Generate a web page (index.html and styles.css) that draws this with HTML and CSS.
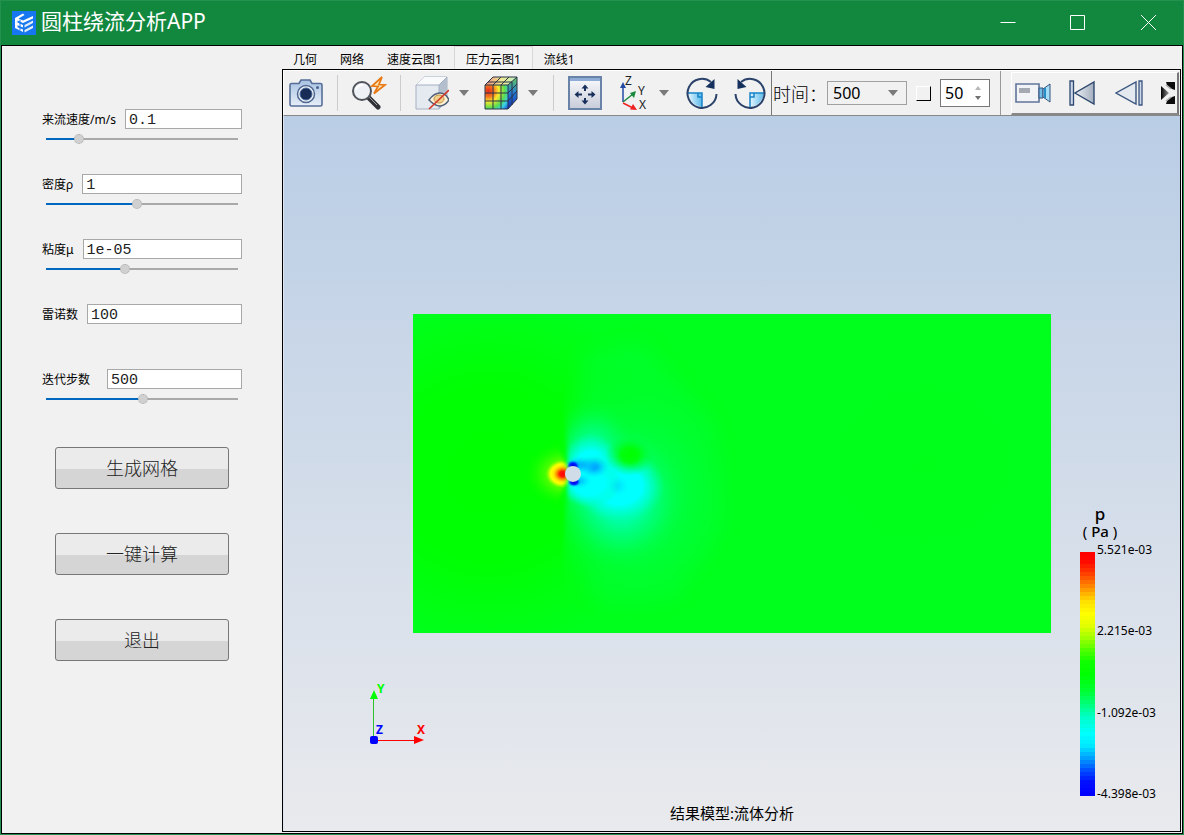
FILE: index.html
```html
<!DOCTYPE html>
<html lang="zh-CN">
<head>
<meta charset="utf-8">
<title>圆柱绕流分析APP</title>
<link rel="stylesheet" href="styles.css">
</head>
<body>
<div class="window">
  <header class="titlebar">
    <svg class="logo" width="24" height="24" viewBox="0 0 24 24">
      <rect width="24" height="24" fill="#1677f0"/>
      <path d="M3 7 11 2.500 12.500 4 6.500 7.500 11 9.500 21 5v2.500L11 12 5.500 9.500v2L11 14v2.500l-5.500-2.300v2L11 18.500V21l-8-4Z" fill="#fff"/>
      <path d="M12.500 14 21 9.500V12l-8.500 4.500ZM12.500 19 21 14.500V17l-8.500 4.500Z" fill="#e4edfa"/>
      <path d="M8 8.500v11" stroke="#1677f0"/>
    </svg>
    <h1 class="title">圆柱绕流分析APP</h1>
    <div class="window-buttons">
      <button class="window-button" aria-label="最小化"><svg width="16" height="16" viewBox="0 0 16 16"><path d="M.5 7.500h15"/></svg></button>
      <button class="window-button" aria-label="最大化"><svg width="16" height="16" viewBox="0 0 16 16"><path d="M.5.500h14v14H.5z"/></svg></button>
      <button class="window-button" aria-label="关闭"><svg width="16" height="16" viewBox="0 0 16 16"><path d="m1 0 15 15M16 0 1 15"/></svg></button>
    </div>
  </header>
  <main class="content">
    <form class="sidebar">
      <div class="field">
        <div class="field-row"><label for="speed">来流速度/m/s</label><input class="text-input" id="speed" type="text" value="0.1"></div>
        <input class="slider" type="range" min="0" max="182" value="28" aria-label="来流速度" style="--fill:17%">
      </div>
      <div class="field">
        <div class="field-row"><label for="density">密度ρ</label><input class="text-input" id="density" type="text" value="1"></div>
        <input class="slider" type="range" min="0" max="182" value="86" aria-label="密度" style="--fill:47%">
      </div>
      <div class="field">
        <div class="field-row"><label for="viscosity">粘度μ</label><input class="text-input" id="viscosity" type="text" value="1e-05"></div>
        <input class="slider" type="range" min="0" max="182" value="74" aria-label="粘度" style="--fill:41%">
      </div>
      <div class="field">
        <div class="field-row"><label for="reynolds">雷诺数</label><input class="text-input" id="reynolds" type="text" value="100"></div>
      </div>
      <div class="field">
        <div class="field-row field-row-wide"><label for="steps">迭代步数</label><input class="text-input" id="steps" type="text" value="500"></div>
        <input class="slider" type="range" min="0" max="182" value="92" aria-label="迭代步数" style="--fill:50%">
      </div>
      <div class="actions">
        <button class="action" type="button">生成网格</button>
        <button class="action" type="button">一键计算</button>
        <button class="action" type="button">退出</button>
      </div>
    </form>
    <section class="workspace">
      <nav class="tabs" role="tablist">
        <button class="tab" role="tab">几何</button>
        <button class="tab" role="tab">网络</button>
        <button class="tab" role="tab">速度云图1</button>
        <button class="tab tab-active" role="tab" aria-selected="true">压力云图1</button>
        <button class="tab" role="tab">流线1</button>
      </nav>
      <div class="panel">
        <div class="toolbar">
          <div class="tool-group">
            <button class="tool" type="button" aria-label="截图">
              <svg width="34" height="28" viewBox="0 0 34 28"><defs><linearGradient id="cam" x2="0" y2="1"><stop stop-color="#a9c2e2"/><stop offset="1" stop-color="#e6eef8"/></linearGradient></defs><path d="M2.500 4.500H10L12 1h9l2 3.500h8.500q1.500 0 1.500 1.500v19q0 2-1.500 2h-29Q1 27 1 25V6q0-1.500 1.500-1.500Z" fill="url(#cam)" stroke="#576f98" stroke-width="1.600"/><circle cx="17" cy="15" r="8.500" fill="#f2f6fb" stroke="#4e6791" stroke-width="1.500"/><circle cx="17" cy="15" r="6" fill="#182c56" stroke="#45679b"/><circle cx="28.500" cy="8.500" r="1.500" fill="#47638f"/></svg>
            </button>
          </div>
          <div class="tool-group tool-group-search">
            <button class="tool" type="button" aria-label="快速查询">
              <svg width="36" height="34" viewBox="0 0 36 34"><path d="m18 22 9 9" stroke="#303238" stroke-width="5" stroke-linecap="round"/><path d="m18 21 8 8" stroke="#9da1a8" stroke-width="1"/><circle cx="11" cy="15" r="9" fill="#eef1f5" stroke="#50545b" stroke-width="2"/><path d="M5 14q1-5 7-5" fill="none" stroke="#fff" stroke-width="2"/><path d="m31 1-10 9 6 .5-4 7 11-8.500-6-.5Z" fill="#ffe6b4" stroke="#e87814" stroke-width="1.700"/></svg>
            </button>
          </div>
          <div class="tool-group">
            <button class="tool tool-menu" type="button" aria-label="显示">
              <svg width="34" height="34" viewBox="0 0 34 34"><path d="M1 9 9 1h23v24l-8 8H1Z" fill="#e5eaf1" stroke="#a5b0c2"/><path d="M24 9 32 1v24l-8 8Z" fill="#b4bfce"/><path d="M1 9 9 1h23l-8 8Z" fill="#f8fafc"/><path d="M1 9h23v24M24 9l8-8" stroke="#a5b0c2" fill="none"/><path d="M14 24q5-7 11-7t9 7q-4 6-9 6t-11-6Z" fill="#fff1d1" stroke="#50617b" stroke-width="1.500"/><ellipse cx="24" cy="23" rx="5" ry="4" fill="#f1d28c" stroke="#bd9148"/><path d="m14 33 20-19" stroke="#d43a2b" stroke-width="1.700"/></svg>
              <svg class="caret" width="10" height="6" viewBox="0 0 10 6"><path d="M0 0h10L5 6Z"/></svg>
            </button>
            <button class="tool tool-menu" type="button" aria-label="云图">
              <svg width="34" height="34" viewBox="0 0 34 34"><defs><radialGradient id="hot" cx=".15" cy=".25" r="1.100"><stop stop-color="#e8281c"/><stop offset=".22" stop-color="#f47820"/><stop offset=".4" stop-color="#fce82c"/><stop offset=".65" stop-color="#58dc50"/><stop offset=".82" stop-color="#38cfe8"/><stop offset="1" stop-color="#1850d8"/></radialGradient><linearGradient id="top"><stop stop-color="#f08878"/><stop offset=".5" stop-color="#f0e890"/><stop offset="1" stop-color="#b8f0c0"/></linearGradient><linearGradient id="side" x2="0" y2="1"><stop stop-color="#64cc58"/><stop offset=".5" stop-color="#247cd8"/><stop offset="1" stop-color="#102cb0"/></linearGradient></defs><path d="M1 9h23v24H1Z" fill="url(#hot)"/><path d="M1 9 9 1h24l-9 8Z" fill="url(#top)"/><path d="m24 9 9-8v22l-9 10Z" fill="url(#side)"/><path d="M1 9h23v24H1ZM1 17h23l9-9M1 25h23l9-10M9 33V9l8-8M17 33V9l8-8M1 9l8-8h24l-9 8M4 6h24v23M33 1v22l-9 10" fill="none" stroke="#2b3347" stroke-width="1"/></svg>
              <svg class="caret" width="10" height="6" viewBox="0 0 10 6"><path d="M0 0h10L5 6Z"/></svg>
            </button>
          </div>
          <div class="tool-group">
            <button class="tool" type="button" aria-label="适应窗口">
              <svg width="34" height="34" viewBox="0 0 34 34"><defs><linearGradient id="fit" x2="0" y2="1"><stop stop-color="#fafbfd"/><stop offset="1" stop-color="#c8ccd8"/></linearGradient></defs><path d="M1 1h32v32H1Z" fill="url(#fit)" stroke="#6882a8" stroke-width="2"/><path d="M2 2h30v3H2Z" fill="#8eacd6"/><path d="M14 18.500H9M20 18.500h5M17 15v-4M17 22v4" stroke="#182f5c" stroke-width="2"/><path d="m6.500 18.500 4-3.500v7ZM27.500 18.500l-4-3.500v7ZM17 8.500 13.500 12.500h7ZM17 28.500 13.500 24.500h7Z" fill="#182f5c"/></svg>
            </button>
            <button class="tool tool-menu tool-axes" type="button" aria-label="视图方向">
              <svg width="30" height="40" viewBox="0 -4 30 40"><path d="M4 25V9" stroke="#264ba5" stroke-width="1.500"/><path d="m4 5-3 6h6Z" fill="#264ba5"/><path d="m4 25 10-8" stroke="#198a3d" stroke-width="1.500"/><path d="m17 14-6 2 4 5Z" fill="#198a3d"/><path d="m4 26 10 5" stroke="#e22" stroke-width="1.500"/><path d="m18 33-7-.5 3-5.500Z" fill="#e22"/><g class="axes-letters"><text x="6" y="8">Z</text><text x="19" y="18">Y</text><text x="20" y="32">X</text></g></svg>
              <svg class="caret" width="10" height="6" viewBox="0 0 10 6"><path d="M0 0h10L5 6Z"/></svg>
            </button>
            <button class="tool tool-rotate" type="button" aria-label="顺时针旋转">
              <svg width="32" height="32" viewBox="0 0 32 32"><defs><linearGradient id="quad"><stop stop-color="#e6f6ff"/><stop offset="1" stop-color="#58b8ea"/></linearGradient></defs><path d="M2 16h14v14Q4 28 2 16Z" fill="url(#quad)"/><path d="M2 16h14v14M12 16v4h4" fill="none" stroke="#1684c8" stroke-width="1.500"/><path d="M25 5A14.500 14.500 0 1 0 30.500 17" fill="none" stroke="#2b426b" stroke-width="2"/><path d="M28.500 2v10l-9-2Z" fill="#15305d"/></svg>
            </button>
            <button class="tool tool-rotate" type="button" aria-label="逆时针旋转">
              <svg width="32" height="32" viewBox="0 0 32 32"><path d="M30 16H16v14Q28 28 30 16Z" fill="url(#quad)"/><path d="M30 16H16v14M20 16v4h-4" fill="none" stroke="#1684c8" stroke-width="1.500"/><path d="M7 5A14.500 14.500 0 1 1 1.500 17" fill="none" stroke="#2b426b" stroke-width="2"/><path d="M3.500 2v10l9-2Z" fill="#15305d"/></svg>
            </button>
          </div>
          <div class="time-group">
            <label class="time-label" for="time">时间：</label>
            <div class="select-box">
              <select class="select" id="time"><option>500</option></select>
              <svg class="caret select-caret" width="10" height="6" viewBox="0 0 10 6"><path d="M0 0h10L5 6Z"/></svg>
            </div>
            <input class="check" type="checkbox" aria-label="启用步长">
            <div class="spin">
              <input class="spin-input" type="text" value="50" aria-label="步长">
              <div class="spin-buttons">
                <button type="button" aria-label="增加"><svg width="6" height="4" viewBox="0 0 6 4"><path d="M0 4h6L3 0Z" fill="#b8b8b8"/></svg></button>
                <button type="button" aria-label="减少"><svg width="6" height="4" viewBox="0 0 6 4"><path d="M0 0h6L3 4Z" fill="#707070"/></svg></button>
              </div>
            </div>
          </div>
          <div class="player">
            <button class="tool" type="button" aria-label="录制">
              <svg width="36" height="20" viewBox="0 0 36 20"><path d="M1 1h23v18H1Z" fill="#f1f3f7" stroke="#60759b" stroke-width="1.600"/><path d="M4 5h11v5H4Z" fill="#a5a9b2"/><path d="M24 5h4v10h-4Z" fill="#72bce6" stroke="#36527e"/><path d="m28 6 7-5v18l-7-5Z" fill="#a6ddf6" stroke="#36527e"/><path d="M30 5v10" stroke="#268cc8" stroke-width="2"/></svg>
            </button>
            <button class="tool" type="button" aria-label="第一帧">
              <svg width="26" height="26" viewBox="0 0 26 26"><defs><linearGradient id="play"><stop stop-color="#eceff3"/><stop offset="1" stop-color="#a3afbf"/></linearGradient></defs><path d="M1 1h3.500v24H1Z" fill="#c9d6e7" stroke="#2f486f" stroke-width="1.300"/><path d="M25 2v22L6 13Z" fill="url(#play)" stroke="#2f486f" stroke-width="1.400"/></svg>
            </button>
            <button class="tool" type="button" aria-label="上一帧">
              <svg width="28" height="26" viewBox="0 0 28 26"><path d="M21 2v22L1 13Z" fill="#e4e8ef" stroke="#3a557f" stroke-width="1.400"/><path d="M24 1h3v24h-3Z" fill="#cddaea" stroke="#3a557f" stroke-width="1.300"/></svg>
            </button>
            <button class="tool" type="button" aria-label="更多">
              <svg width="14" height="22" viewBox="0 0 14 22"><defs><linearGradient id="more"><stop stop-color="#000"/><stop offset="1" stop-color="#999"/></linearGradient></defs><path d="M0 4 8 11 0 18Z" fill="url(#more)"/><path d="M5 0h9v8l-3-1-5-4ZM5 22h9v-8l-3 1-5 4Z" fill="#0c0c0c"/><path d="m5 3 5 4M5 19l5-4" stroke="#aaa" stroke-width="1.500"/></svg>
            </button>
          </div>
        </div>
        <div class="viewport">
          <svg class="plot" viewBox="0 0 639 320" role="img" aria-label="压力云图">
            <defs>
              <radialGradient id="gLeft"><stop stop-color="#0f0"/><stop offset=".5" stop-color="#0f0" stop-opacity=".9"/><stop offset="1" stop-color="#0f0" stop-opacity="0"/></radialGradient>
              <radialGradient id="gWide"><stop stop-color="#00ff60" stop-opacity=".95"/><stop offset=".3" stop-color="#00ff50" stop-opacity=".8"/><stop offset=".6" stop-color="#00ff38" stop-opacity=".6"/><stop offset="1" stop-color="#00ff20" stop-opacity="0"/></radialGradient>
              <radialGradient id="gHalo"><stop stop-color="#00ffc0"/><stop offset=".35" stop-color="#00ffa8" stop-opacity=".9"/><stop offset=".6" stop-color="#00ff80" stop-opacity=".6"/><stop offset=".8" stop-color="#00ff60" stop-opacity=".25"/><stop offset="1" stop-color="#00ff40" stop-opacity="0"/></radialGradient>
              <radialGradient id="gCyan"><stop stop-color="#0ff"/><stop offset=".5" stop-color="#0ff"/><stop offset=".75" stop-color="#00ffe0" stop-opacity=".55"/><stop offset="1" stop-color="#00ffb0" stop-opacity="0"/></radialGradient>
              <radialGradient id="gBlue"><stop stop-color="#00a0ff"/><stop offset=".3" stop-color="#00acff" stop-opacity=".9"/><stop offset="1" stop-color="#00e0ff" stop-opacity="0"/></radialGradient>
              <radialGradient id="gDeep"><stop stop-color="#00d"/><stop offset=".5" stop-color="#0020ff"/><stop offset="1" stop-color="#00a0ff" stop-opacity="0"/></radialGradient>
              <radialGradient id="gEddy"><stop stop-color="#0f0"/><stop offset=".35" stop-color="#00ff08" stop-opacity=".95"/><stop offset="1" stop-color="#00ff50" stop-opacity="0"/></radialGradient>
              <radialGradient id="gWarm" cx=".75" fx=".75"><stop stop-color="#c0ff00"/><stop offset=".4" stop-color="#80ff00" stop-opacity=".7"/><stop offset="1" stop-color="#0f0" stop-opacity="0"/></radialGradient>
              <radialGradient id="gHot"><stop stop-color="#f00"/><stop offset=".2" stop-color="#ff1800"/><stop offset=".38" stop-color="#ff9000"/><stop offset=".55" stop-color="#ffe800"/><stop offset=".72" stop-color="#ff0"/><stop offset="1" stop-color="#c0ff00" stop-opacity="0"/></radialGradient>
              <filter id="soft" x="-10%" y="-10%" width="120%" height="120%"><feGaussianBlur stdDeviation="9"/></filter>
              <filter id="edge" x="-10%" y="-10%" width="120%" height="120%"><feGaussianBlur stdDeviation="2"/></filter>
              <mask id="wake" maskUnits="userSpaceOnUse" x="0" y="0" width="639" height="320"><path d="M148-20h520v360H148l3-120 4-60-3-60Z" fill="#fff" filter="url(#edge)"/></mask>
              <mask id="front" maskUnits="userSpaceOnUse" x="0" y="0" width="639" height="320"><path d="M0 0h130l16 135 9 20v10l-9 20-16 135H0Z" fill="#fff" filter="url(#edge)"/></mask>
            </defs>
            <path d="M0 0h639v320H0Z" fill="#00ff1c"/>
            <ellipse cx="75" cy="160" rx="190" ry="175" fill="url(#gLeft)"/>
            <ellipse cx="510" cy="150" rx="100" ry="90" fill="url(#gLeft)" opacity=".1"/>
            <path d="M156 160 170 40 230 30 300 110 310 210 260 285 180 285Z" fill="#00ff34" opacity=".55" filter="url(#soft)"/>
            <g mask="url(#wake)">
              <ellipse cx="218" cy="178" rx="115" ry="130" fill="url(#gWide)"/>
              <ellipse cx="180" cy="150" rx="46" ry="66" fill="url(#gHalo)"/>
              <ellipse cx="208" cy="184" rx="67" ry="72" fill="url(#gHalo)"/>
              <ellipse cx="178" cy="156" rx="33" ry="37" fill="url(#gCyan)"/>
              <ellipse cx="206" cy="172" rx="46" ry="37" fill="url(#gCyan)"/>
              <ellipse cx="176" cy="168" rx="32" ry="26" fill="url(#gCyan)"/>
            </g>
            <ellipse cx="217" cy="141" rx="25" ry="21" fill="url(#gEddy)"/>
            <ellipse cx="181" cy="153" rx="15" ry="11" fill="url(#gBlue)"/>
            <ellipse cx="167" cy="151" rx="17" ry="9" fill="url(#gBlue)" opacity=".8"/>
            <ellipse cx="166" cy="167" rx="13" ry="8" fill="url(#gBlue)" opacity=".6"/>
            <ellipse cx="205" cy="172" rx="11" ry="11" fill="url(#gBlue)" opacity=".25"/>
            <ellipse cx="160" cy="152" rx="7" ry="6" fill="url(#gDeep)"/>
            <ellipse cx="161" cy="168" rx="7" ry="5" fill="url(#gDeep)"/>
            <g mask="url(#front)">
              <ellipse cx="131" cy="160" rx="42" ry="34" fill="url(#gWarm)"/>
              <ellipse cx="150" cy="160" rx="17" ry="14" fill="url(#gHot)"/>
            </g>
            <circle cx="160" cy="160" r="8" fill="#d1dce9"/>
          </svg>
          <svg class="triad" width="64" height="72" viewBox="0 -6 64 72">
            <path d="M7.500 54V12" stroke="#30c030"/><path d="M8 7 4 16h8Z" fill="#0f0"/>
            <path d="M12 57.500h38" stroke="#f00"/><path d="m58 57-10-4v8Z" fill="#f00"/>
            <rect x="4" y="53" width="8" height="8" rx="2" fill="#00f"/>
            <g class="triad-letters"><text x="11" y="10">Y</text><text x="51" y="51" class="letter-x">X</text><text x="10" y="51" class="letter-z">Z</text></g>
          </svg>
          <div class="legend">
            <div class="legend-title"><span class="legend-name">p</span><span class="legend-unit">( <b>Pa</b> )</span></div>
            <div class="legend-body">
              <div class="legend-bar"></div>
              <div class="legend-values"><span>5.521e-03</span><span>2.215e-03</span><span>-1.092e-03</span><span>-4.398e-03</span></div>
            </div>
          </div>
          <p class="caption">结果模型:流体分析</p>
        </div>
      </div>
    </section>
  </main>
</div>
<script src="legend.js"></script>
</body>
</html>
```

FILE: styles.css
```css
* { box-sizing: border-box; }
body {
  margin: 0;
  font-family: "Noto Sans", "Noto Sans CJK SC", sans-serif;
  font-size: 12px;
  color: #000;
}
button, input, select { font: inherit; color: inherit; }
button { padding: 0; border: 0; background: none; }
svg { display: block; flex: none; }
.window {
  min-height: 100vh;
  display: flex;
  flex-direction: column;
  background: #12883f;
  border: 1px solid #25914f;
}
.titlebar { height: 44px; display: flex; align-items: center; padding-left: 11px; flex: none; }
.title {
  flex: 1;
  margin: 0;
  padding: 0 0 4px 5px;
  color: #fff;
  font-size: 21px;
  line-height: 28px;
  font-weight: 400;
}
.window-buttons { display: flex; height: 100%; }
.window-button { width: 70px; display: grid; place-items: center; }
.window-button svg { fill: none; stroke: #fff; stroke-width: 1; }
.content {
  flex: 1;
  display: flex;
  background: #f1f1f1;
  border: 1px solid #000;
}
.sidebar { width: 280px; flex: none; padding: 63px 40px 0; }
.field { height: 65px; }
.field-row { display: flex; align-items: center; gap: 9px; height: 20px; }
.field-row-wide { gap: 17px; }
.field-row label { white-space: nowrap; line-height: 20px; padding-top: 2px; }
.text-input {
  flex: 1;
  min-width: 0;
  height: 20px;
  padding: 2px 3px 0;
  border: 1px solid #a8a8a8;
  background: #fff;
  font-family: "Liberation Mono", monospace;
  font-size: 15px;
  color: #222;
}
.slider {
  appearance: none;
  display: block;
  width: 192px;
  height: 20px;
  margin: 0 4px;
  background: linear-gradient(90deg, #0067c0 var(--fill), #a9a9a9 var(--fill)) center / 100% 2px no-repeat;
}
.slider::-webkit-slider-thumb {
  appearance: none;
  width: 10px;
  height: 10px;
  border: 1px dotted #aaa;
  border-radius: 50%;
  background: #d0d0d0;
}
.actions { display: flex; flex-direction: column; gap: 44px; padding: 13px 13px 0; }
.action {
  height: 42px;
  padding-bottom: 3px;
  border: 1px solid #777;
  border-radius: 3px;
  background: linear-gradient(#ebebeb 52%, #d5d5d5 52%);
  font-size: 18px;
  font-weight: 300;
  color: #222;
}
.workspace { flex: 1; min-width: 0; display: flex; flex-direction: column; padding: 0 1px 1px 0; }
.tabs { height: 23px; display: flex; flex: none; }
.tab { padding: 4px 12px 0 11px; white-space: nowrap; line-height: 18px; border: 0 solid #d8d8d8; }
.tab-active { border-width: 1px 1px 0; padding: 3px 11px 0; background: #f3f3f3; }
.panel { flex: 1; display: flex; flex-direction: column; border: 1px solid #000; min-width: 0; }
.toolbar {
  height: 46px;
  display: flex;
  align-items: center;
  flex: none;
  overflow: hidden;
  border: solid #fff;
  border-width: 1px 0 0 1px;
  border-bottom: 1px solid #888;
}
.tool-group { display: flex; align-items: center; height: 36px; padding: 0 14px; border-right: 1px solid #ccc; }
.tool-group:first-child { padding-left: 5px; }
.tool-group:nth-child(3) { gap: 15px; padding-right: 15px; }
.tool-group:nth-child(4) { gap: 17px; height: 44px; padding-right: 6px; border-color: #777; }
.tool-group-search { padding: 0 13px; }
.tool { display: flex; align-items: center; flex: none; }
.tool-menu { gap: 10px; }
.tool-rotate { margin-right: -1px; }
.caret { fill: #7a7a7a; }
.axes-letters { font: 12px "Noto Sans", sans-serif; fill: #222; }
.time-group { display: flex; align-items: center; height: 44px; padding: 0 10px 0 1px; border-right: 1px solid #999; }
.time-label { width: 54px; font-size: 18px; font-weight: 300; white-space: nowrap; }
.select-box { position: relative; width: 80px; }
.select {
  appearance: none;
  width: 100%;
  height: 24px;
  padding: 0 5px;
  border: 1px solid #a0a0a0;
  border-radius: 0;
  background: #f1f1f1;
  font-size: 16px;
}
.select-caret { position: absolute; right: 9px; top: 9px; pointer-events: none; }
.check {
  appearance: none;
  width: 15px;
  height: 15px;
  margin: 0 9px;
  border: 1px solid #fff;
  border-right: 1px solid #000;
  border-bottom: 1px solid #000;
}
.spin { display: flex; width: 50px; height: 28px; border: 1px solid #777; background: #fff; }
.spin-input { width: 34px; padding: 0 0 0 4px; border: 0; background: none; font-size: 16px; }
.spin-buttons { display: flex; flex-direction: column; justify-content: center; gap: 6px; }
.player {
  flex: 1;
  min-width: 0;
  overflow: hidden;
  display: flex;
  align-items: center;
  gap: 18px;
  height: 43px;
  margin: 1px 1px 0 10px;
  padding-left: 3px;
  border: solid #fff;
  border-width: 1px 2px 2px 1px;
  border-right-color: #777;
  border-bottom-color: #888;
}
.player .tool:nth-child(3) { margin-left: 2px; }
.viewport {
  position: relative;
  flex: 1;
  display: grid;
  place-items: center;
  background: linear-gradient(#b9cde5, #e9eaed);
  border-left: 1px solid #dce5f0;
}
.plot { width: 71.3%; }
.triad { position: absolute; left: 82px; bottom: 82px; }
.triad-letters { font: 700 12px "Noto Sans", sans-serif; fill: #0f0; }
.letter-x { fill: #f00; }
.letter-z { fill: #00f; }
.legend { position: absolute; right: 20px; bottom: 33px; width: 80px; }
.legend-title { display: flex; flex-direction: column; align-items: center; width: 40px; padding-bottom: 5px; }
.legend-name { font-size: 17px; font-weight: 500; line-height: 17px; }
.legend-unit { font-size: 15px; line-height: 18px; white-space: pre; }
.legend-unit b { font-weight: 500; }
.legend-body { display: flex; gap: 2px; height: 253px; }
.legend-bar { width: 15px; margin: 7px 0 2px; display: flex; flex-direction: column; }
.legend-band { flex: 1; }
.legend-values { display: flex; flex-direction: column; justify-content: space-between; line-height: 8px; white-space: nowrap; padding-top: 1px; }
.caption { position: absolute; left: 0; right: 0; bottom: 8px; margin: 0; text-align: center; font-size: 15px; line-height: 20px; }
```

FILE: legend.js
```js
// Fills the colour bar with discrete bands interpolated between the stops.
const stops = [
  [0, 255, 0, 0], [0.03, 255, 8, 0], [0.08, 255, 60, 0], [0.13, 255, 128, 0], [0.17, 255, 185, 0],
  [0.2, 255, 225, 0], [0.25, 255, 255, 0], [0.3, 225, 255, 0], [0.35, 160, 255, 0],
  [0.4, 80, 255, 0], [0.45, 16, 255, 0], [0.5, 0, 255, 0], [0.57, 0, 255, 48],
  [0.63, 0, 255, 128], [0.68, 0, 255, 200], [0.75, 0, 255, 255], [0.8, 0, 232, 255],
  [0.85, 0, 160, 255], [0.9, 0, 80, 255], [0.95, 0, 16, 255], [1, 0, 0, 255]
];
const bar = document.querySelector(".legend-bar");
const bands = 61;
for (let i = 0; i < bands; i++) {
  const t = i / (bands - 1);
  const k = Math.max(1, stops.findIndex(s => s[0] >= t));
  const a = stops[k - 1];
  const b = stops[k];
  const f = (t - a[0]) / (b[0] - a[0]);
  const rgb = [1, 2, 3].map(c => Math.round(a[c] + (b[c] - a[c]) * f));
  const band = document.createElement("div");
  band.className = "legend-band";
  band.style.background = `rgb(${rgb.join(",")})`;
  bar.append(band);
}
```
